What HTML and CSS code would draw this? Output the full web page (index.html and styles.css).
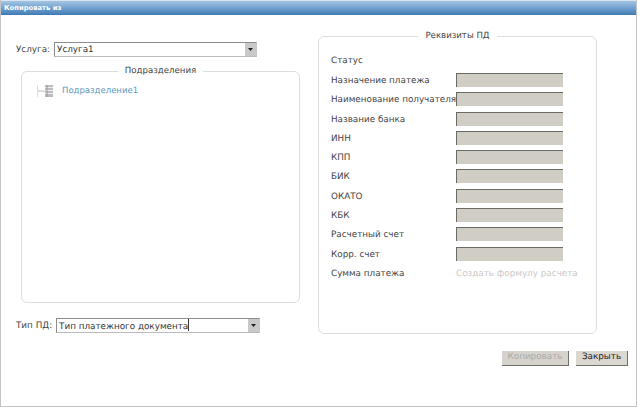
FILE: index.html
```html
<!DOCTYPE html>
<html lang="ru">
<head>
<meta charset="utf-8">
<title>Копировать из</title>
<link rel="stylesheet" href="styles.css">
</head>
<body>
<div class="window">
  <div class="titlebar">Копировать из</div>
  <div class="content">
    <div class="left">
      <div class="field-row service-row">
        <span class="label">Услуга:</span>
        <div class="combo service-combo"><span class="combo-text">Услуга1</span><span class="combo-btn"><svg width="5" height="3" viewBox="0 0 5 3"><path d="M0 0h5L2.500 3z" fill="#222"/></svg></span></div>
      </div>
      <fieldset class="group tree-group">
        <legend>Подразделения</legend>
        <div class="tree-row">
          <svg class="tree-icon" width="18" height="14" viewBox="0 0 18 14">
            <path d="M0.500 1v12" stroke="#ddd" fill="none"/>
            <path d="M1 7h7" stroke="#bbb" fill="none"/>
            <rect x="8" y="1" width="8" height="12" fill="#bdbdbd"/>
            <path d="M8 3.500h8M8 6.500h8M8 9.500h8" stroke="#eee" fill="none"/>
            <path d="M10 1v12" stroke="#999" fill="none"/>
          </svg>
          <span class="tree-link">Подразделение1</span>
        </div>
      </fieldset>
      <div class="field-row type-row">
        <span class="label">Тип ПД:</span>
        <div class="combo type-combo"><span class="combo-text">Тип платежного документа<span class="caret"></span></span><span class="combo-btn"><svg width="5" height="3" viewBox="0 0 5 3"><path d="M0 0h5L2.500 3z" fill="#222"/></svg></span></div>
      </div>
    </div>
    <div class="right">
      <fieldset class="group details-group">
        <legend>Реквизиты ПД</legend>
        <div class="details-grid">
          <span class="label status-label">Статус</span><span></span>
          <span class="label">Назначение платежа</span><span class="readonly"></span>
          <span class="label">Наименование получателя</span><span class="readonly"></span>
          <span class="label">Название банка</span><span class="readonly"></span>
          <span class="label">ИНН</span><span class="readonly"></span>
          <span class="label">КПП</span><span class="readonly"></span>
          <span class="label">БИК</span><span class="readonly"></span>
          <span class="label">ОКАТО</span><span class="readonly"></span>
          <span class="label">КБК</span><span class="readonly"></span>
          <span class="label">Расчетный счет</span><span class="readonly"></span>
          <span class="label">Корр. счет</span><span class="readonly"></span>
          <span class="label">Сумма платежа</span><span class="muted">Создать формулу расчета</span>
        </div>
      </fieldset>
      <div class="actions">
        <span class="btn btn-disabled">Копировать</span>
        <span class="btn btn-close">Закрыть</span>
      </div>
    </div>
  </div>
</div>
</body>
</html>
```
FILE: styles.css
```css
* { box-sizing: border-box; }
html, body { margin: 0; padding: 0; background: #fff; }
body { width: 638px; height: 408px; overflow: hidden; font-family: "DejaVu Sans", Verdana, sans-serif; font-size: 8.800px; color: #444; text-rendering: geometricPrecision; }
.window { width: 637px; height: 407px; border-left: 1px solid #c4c4c4; border-right: 1px solid #c4c4c4; border-bottom: 1px solid #c4c4c4; display: flex; flex-direction: column; }
.titlebar { height: 15px; padding: 1px 0 0 3px; background: linear-gradient(#a3c4e2, #7daad4 40%, #3f7ab5); color: #fff; font-size: 6.800px; font-weight: bold; line-height: 12px; border-top: 1px solid #d8e4ef; }
.content { flex: 1; display: flex; min-height: 0; }
.left { width: 316px; padding: 27px 0 0 15px; display: flex; flex-direction: column; }
.field-row { display: flex; align-items: center; gap: 3px; }
.label { color: #444; white-space: nowrap; }
.combo { height: 15px; width: 204px; display: flex; border: 1px solid #8d8d8d; border-right-color: #c8c8c8; border-bottom-color: #bbb; background: #fff; }
.service-combo { width: 203px; margin-left: 1px; }
.combo-text { flex: 1; padding-left: 2px; line-height: 14px; color: #333; }
.combo-btn { width: 11px; background: #c9c9c9; display: flex; align-items: center; justify-content: center; }
.caret { display: inline-block; width: 1px; height: 12px; background: #333; vertical-align: -2px; }
.group { margin: 0; padding: 0; border: 1px solid #dedede; border-radius: 6px; }
.group legend { margin: 0 auto; padding: 0 7px; font-size: 8.600px; color: #444; line-height: 12px; }
.tree-group { margin: 8px 0 0 5px; width: 279px; height: 238px; }
.tree-row { display: flex; align-items: center; gap: 7px; margin: 7px 0 0 15px; font-size: 8.500px; }
.tree-link { color: #5b9ac2; }
.type-row { margin-top: 15px; }
.type-row .combo { margin-left: 1px; }
.right { flex: 1; display: flex; flex-direction: column; padding: 15px 0 0 1px; }
.details-group { width: 279px; height: 304px; }
.details-grid { display: grid; grid-template-columns: 125px 107px; grid-auto-rows: 19.300px; align-items: center; padding: 9px 0 0 12px; }
.details-grid .label, .muted { padding-top: 2px; }
.details-grid .status-label { padding-top: 0; }
.readonly { display: block; height: 14px; background: #d0cdc5; border-top: 1px solid #6b6b66; border-left: 1px solid #6b6b66; }
.muted { color: #c9c9c9; white-space: nowrap; }
.actions { display: flex; justify-content: flex-end; gap: 7px; margin: 17px 8px 0 0; }
.btn { height: 15px; line-height: 13px; background: #dbd8d1; border-right: 1px solid #6f6f6a; border-bottom: 1px solid #6f6f6a; color: #222; text-align: center; }
.btn-close { width: 52px; }
.btn-disabled { color: #aaa; background: #d6d3cc; width: 67px; }
```
